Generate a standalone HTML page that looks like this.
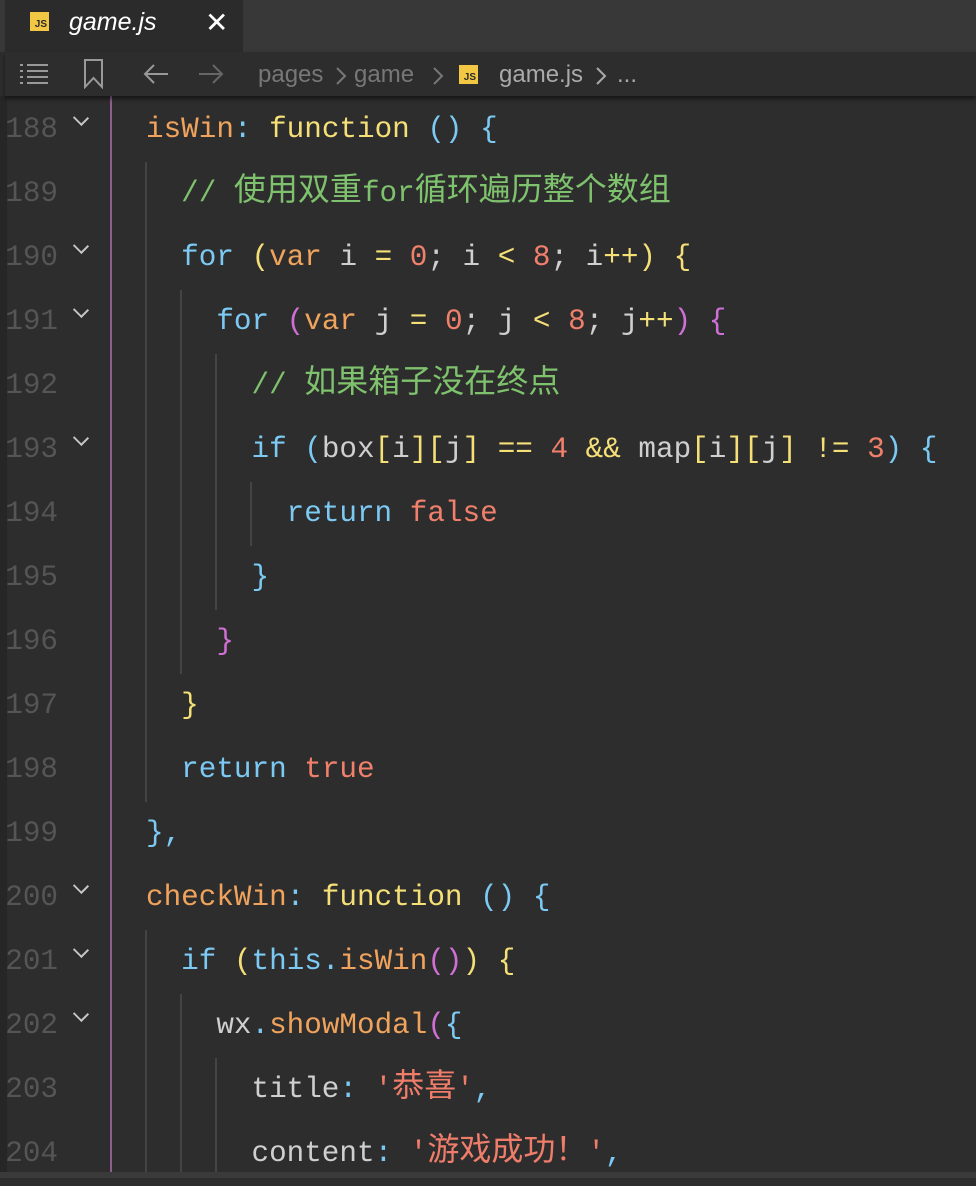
<!DOCTYPE html>
<html><head><meta charset="utf-8"><style>
body{margin:0;width:976px;height:1178px;background:#2d2d2d;overflow:hidden;position:relative;font-family:"Liberation Sans",sans-serif}
.tabs{position:absolute;left:0;top:0;width:976px;height:52px;background:#383838}
.tab{position:absolute;left:5px;top:0;width:238px;height:52px;background:#2b2b2b}
.js{position:absolute;width:19px;height:19px;background:#f2c744;color:#2b2b2b;font:bold 10px "Liberation Sans",sans-serif;display:flex;align-items:flex-end;justify-content:flex-end;padding:0 2px 1px 0;box-sizing:border-box}
.bc{position:absolute;left:5px;top:52px;width:971px;height:44px;background:#2d2d2d;box-shadow:0 3px 4px rgba(0,0,0,.5);z-index:2}
.gut{position:absolute;left:0;top:96px;width:7px;height:1082px;background:#262626}
.row{position:absolute;left:0;height:64px;width:976px;line-height:64px;font-family:"Liberation Mono","Noto Sans CJK SC",monospace;font-size:29.3px;color:#cfcfcf;white-space:pre}
.ln{position:absolute;left:0;width:58px;text-align:right;color:#555}
.tx{position:absolute;left:146px}
.k{font-family:"Noto Sans CJK SC",sans-serif;font-size:32px;line-height:1;vertical-align:1px}
.fold{position:absolute;left:75px;top:14px;width:10px;height:10px;border-right:2px solid #c8c8c8;border-bottom:2px solid #c8c8c8;transform:rotate(45deg) scale(1,.9)}
.g{position:absolute;width:2px;background:#444}
.o{color:#f0a35c}.y{color:#f5df77}.b{color:#7ccaf4}.c{color:#7fc26d}.n{color:#f0806c}.p{color:#d070d6}.s{color:#ef7d6a}
.bt{position:absolute;top:9px;font-size:24px}
</style></head><body>
<div class="tabs"><div class="tab">
<div class="js" style="left:25px;top:12px">JS</div>
<span style="position:absolute;left:64px;top:8px;color:#fff;font-size:25px;font-style:italic">game.js</span>
<span style="position:absolute;left:200px;top:6px;color:#fff;font-size:28px">✕</span>
</div></div>
<div class="bc">
<svg style="position:absolute;left:13px;top:11px" width="32" height="22" stroke="#999" stroke-width="2"><path d="M2 2h3M9 2h21M2 8h3M9 8h21M2 14h3M9 14h21M2 20h3M9 20h21"/></svg>
<svg style="position:absolute;left:78px;top:7px" width="22" height="30" fill="none" stroke="#999" stroke-width="2"><path d="M2 1h17v27l-8.5-9-8.5 9z"/></svg>
<svg style="position:absolute;left:137px;top:10px" width="28" height="24" fill="none" stroke="#999" stroke-width="2"><path d="M26 12H3M12 3l-9 9 9 9"/></svg>
<svg style="position:absolute;left:192px;top:10px" width="28" height="24" fill="none" stroke="#666" stroke-width="2"><path d="M2 12h23M16 3l9 9-9 9"/></svg>
<span class="bt" style="left:253px;color:#777">pages</span>
<svg style="position:absolute;left:330px;top:14px" width="12" height="20" fill="none" stroke="#777" stroke-width="2"><path d="M2 2l8 8-8 8"/></svg>
<span class="bt" style="left:349px;color:#777">game</span>
<svg style="position:absolute;left:427px;top:14px" width="12" height="20" fill="none" stroke="#777" stroke-width="2"><path d="M2 2l8 8-8 8"/></svg>
<div class="js" style="left:454px;top:13px">JS</div>
<span class="bt" style="left:494px;color:#aaa">game.js</span>
<svg style="position:absolute;left:590px;top:14px" width="12" height="20" fill="none" stroke="#aaa" stroke-width="2"><path d="M2 2l8 8-8 8"/></svg>
<span class="bt" style="left:612px;color:#aaa">...</span>
</div>
<div class="gut"></div>
<div class="g" style="left:110px;top:96px;height:1082px;background:#8e5e8e"></div>
<div class="g" style="left:145px;top:162px;height:640px"></div>
<div class="g" style="left:180px;top:290px;height:384px"></div>
<div class="g" style="left:215px;top:354px;height:256px"></div>
<div class="g" style="left:250px;top:482px;height:64px"></div>
<div class="g" style="left:145px;top:930px;height:248px"></div>
<div class="g" style="left:180px;top:994px;height:184px"></div>
<div class="g" style="left:215px;top:1058px;height:120px"></div>
<div class="g" style="left:0;top:1172px;height:6px;width:976px;background:#3a3a3a"></div>

<div class="row" style="top:98px"><span class="ln">188</span><i class="fold"></i><span class="tx"><span class="o">isWin</span><span class="b">:</span> <span class="y">function</span> <span class="b">() {</span></span></div>
<div class="row" style="top:162px"><span class="ln">189</span><span class="tx">  <span class="c">// <span class="k">使用双重</span>for<span class="k">循环遍历整个数组</span></span></span></div>
<div class="row" style="top:226px"><span class="ln">190</span><i class="fold"></i><span class="tx">  <span class="b">for</span> <span class="y">(</span><span class="o">var</span> i <span class="y">=</span> <span class="n">0</span>; i <span class="y">&lt;</span> <span class="n">8</span>; i<span class="y">++)</span> <span class="y">{</span></span></div>
<div class="row" style="top:290px"><span class="ln">191</span><i class="fold"></i><span class="tx">    <span class="b">for</span> <span class="p">(</span><span class="o">var</span> j <span class="y">=</span> <span class="n">0</span>; j <span class="y">&lt;</span> <span class="n">8</span>; j<span class="y">++</span><span class="p">)</span> <span class="p">{</span></span></div>
<div class="row" style="top:354px"><span class="ln">192</span><span class="tx">      <span class="c">// <span class="k">如果箱子没在终点</span></span></span></div>
<div class="row" style="top:418px"><span class="ln">193</span><i class="fold"></i><span class="tx">      <span class="b">if (</span>box<span class="y">[</span>i<span class="y">][</span>j<span class="y">]</span> <span class="y">==</span> <span class="n">4</span> <span class="y">&amp;&amp;</span> map<span class="y">[</span>i<span class="y">][</span>j<span class="y">]</span> <span class="y">!=</span> <span class="n">3</span><span class="b">) {</span></span></div>
<div class="row" style="top:482px"><span class="ln">194</span><span class="tx">        <span class="b">return</span> <span class="n">false</span></span></div>
<div class="row" style="top:546px"><span class="ln">195</span><span class="tx">      <span class="b">}</span></span></div>
<div class="row" style="top:610px"><span class="ln">196</span><span class="tx">    <span class="p">}</span></span></div>
<div class="row" style="top:674px"><span class="ln">197</span><span class="tx">  <span class="y">}</span></span></div>
<div class="row" style="top:738px"><span class="ln">198</span><span class="tx">  <span class="b">return</span> <span class="n">true</span></span></div>
<div class="row" style="top:802px"><span class="ln">199</span><span class="tx"><span class="b">},</span></span></div>
<div class="row" style="top:866px"><span class="ln">200</span><i class="fold"></i><span class="tx"><span class="o">checkWin</span><span class="b">:</span> <span class="y">function</span> <span class="b">() {</span></span></div>
<div class="row" style="top:930px"><span class="ln">201</span><i class="fold"></i><span class="tx">  <span class="b">if</span> <span class="y">(</span><span class="b">this.</span><span class="o">isWin</span><span class="p">()</span><span class="y">)</span> <span class="y">{</span></span></div>
<div class="row" style="top:994px"><span class="ln">202</span><i class="fold"></i><span class="tx">    wx<span class="b">.</span><span class="o">showModal</span><span class="p">(</span><span class="b">{</span></span></div>
<div class="row" style="top:1058px"><span class="ln">203</span><span class="tx">      title<span class="b">:</span> <span class="s">'<span class="k">恭喜</span>'</span><span class="b">,</span></span></div>
<div class="row" style="top:1122px"><span class="ln">204</span><span class="tx">      content<span class="b">:</span> <span class="s">'<span class="k">游戏成功！</span>'</span><span class="b">,</span></span></div>
</body></html>
